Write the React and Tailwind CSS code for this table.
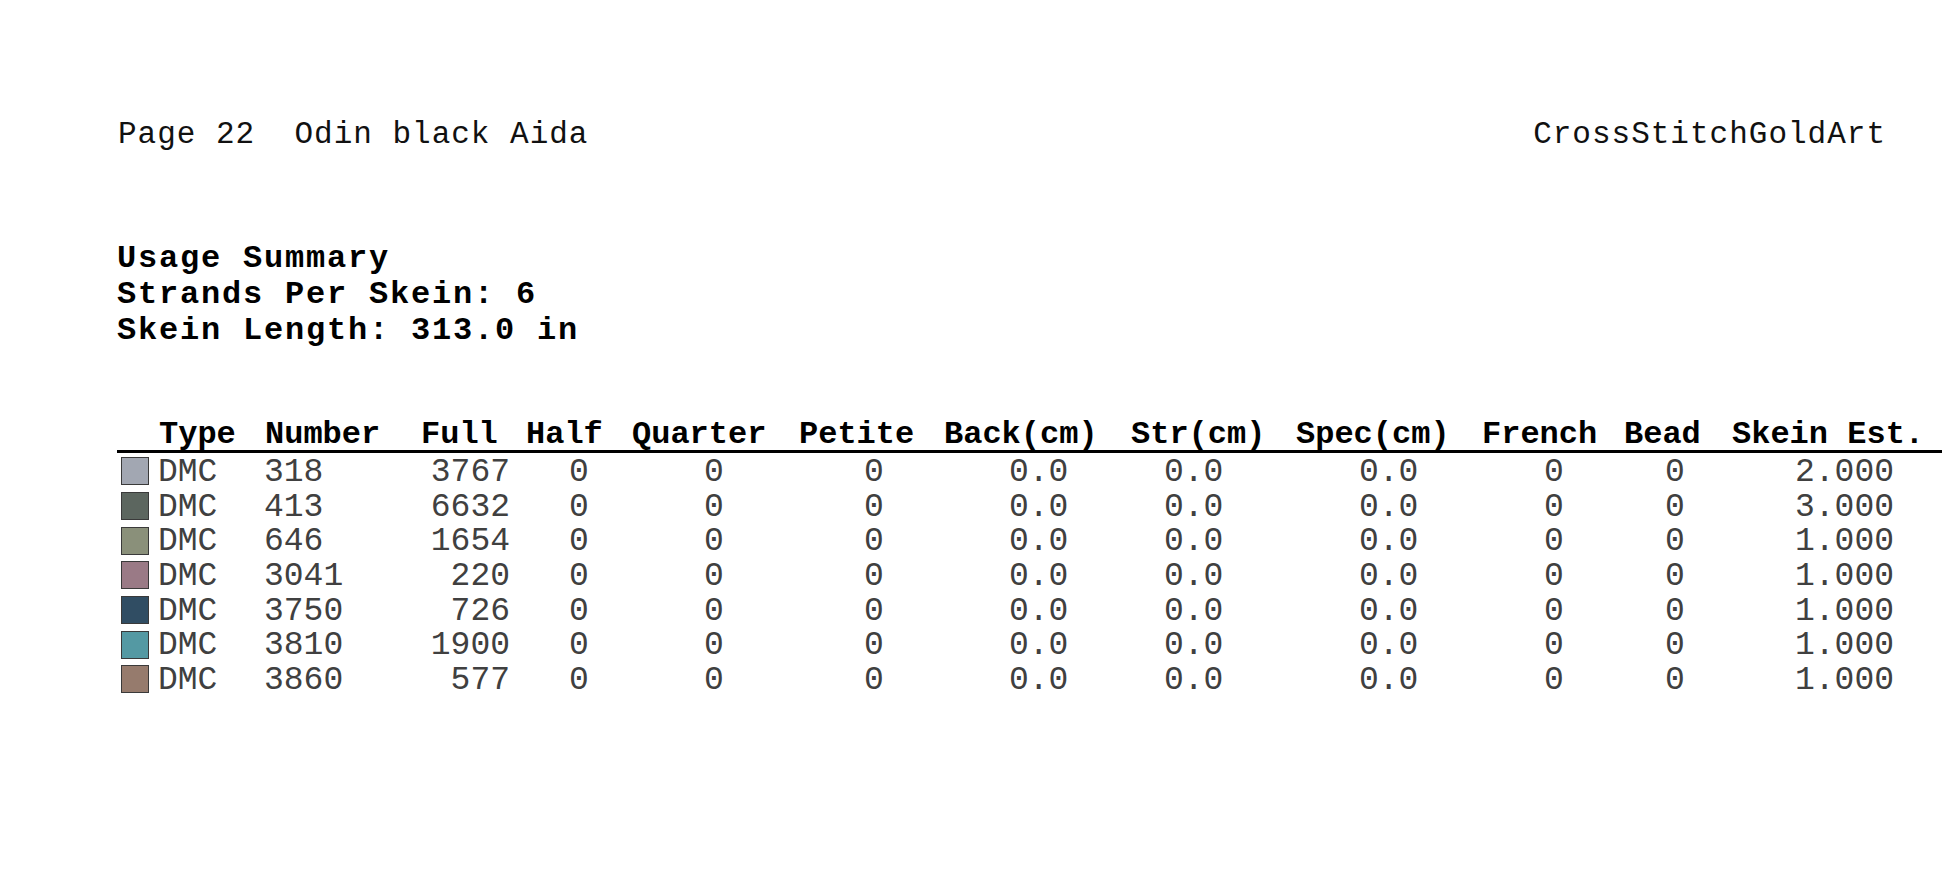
import React from 'react';

const columns = [
  { label: 'Type', head: 'pl-[42px]', cell: 'flex items-center pl-[4px]' },
  { label: 'Number', head: 'pl-[10px]', cell: 'pl-[9px]' },
  { label: 'Full', head: 'pl-[21px]', cell: 'text-right pr-[10px]' },
  { label: 'Half', head: 'pl-[6px]', cell: 'pl-[49px]' },
  { label: 'Quarter', head: 'pl-[12px]', cell: 'pl-[84px]' },
  { label: 'Petite', head: 'pl-[14px]', cell: 'pl-[79px]' },
  { label: 'Back(cm)', head: 'pl-[9px]', cell: 'pl-[74px]' },
  { label: 'Str(cm)', head: 'pl-[16px]', cell: 'pl-[49px]' },
  { label: 'Spec(cm)', head: 'pl-[16px]', cell: 'pl-[79px]' },
  { label: 'French', head: 'pl-[17px]', cell: 'pl-[79px]' },
  { label: 'Bead', head: 'pl-[14px]', cell: 'pl-[55px]' },
  { label: 'Skein Est.', head: 'pl-[12px]', cell: 'pl-[75px]' },
];

const threads = [
  { number: '318', full: '3767', skein: '2.000', swatch: 'bg-[#a2a7b2]' },
  { number: '413', full: '6632', skein: '3.000', swatch: 'bg-[#5c665f]' },
  { number: '646', full: '1654', skein: '1.000', swatch: 'bg-[#8a907a]' },
  { number: '3041', full: '220', skein: '1.000', swatch: 'bg-[#9a7a86]' },
  { number: '3750', full: '726', skein: '1.000', swatch: 'bg-[#304d63]' },
  { number: '3810', full: '1900', skein: '1.000', swatch: 'bg-[#5499a3]' },
  { number: '3860', full: '577', skein: '1.000', swatch: 'bg-[#967b6d]' },
];

const gridCols =
  'grid grid-cols-[138px_145px_120px_100px_165px_150px_180px_165px_185px_145px_110px_222px]';

const mono = { fontFamily: '"Liberation Mono", "DejaVu Sans Mono", monospace' };

const App = () => {
  return (
    <div className="w-[1946px] h-[878px] bg-white text-black" style={mono}>
      {/* page header */}
      <div className="flex justify-between pt-[118px] pl-[118px] pr-[60px] text-[31px] leading-[33px] tracking-[1px] whitespace-pre text-[#111]">
        <span>Page 22  Odin black Aida</span>
        <span>CrossStitchGoldArt</span>
      </div>

      {/* summary */}
      <div className="mt-[90px] pl-[117px] text-[32px] leading-[36px] tracking-[1.8px] font-bold">
        <div>Usage Summary</div>
        <div>Strands Per Skein: 6</div>
        <div>Skein Length: 313.0 in</div>
      </div>

      {/* usage table */}
      <div className="mt-[67px] ml-[117px] w-[1825px]">
        <div className={`${gridCols} h-[37px] border-b-[3px] border-black text-[32px] leading-[37px] font-bold`}>
          {columns.map((col) => (
            <div key={col.label} className={`${col.head} whitespace-nowrap`}>
              {col.label}
            </div>
          ))}
        </div>

        <div className="pt-[1px]">
          {threads.map((t) => {
            const values = ['', t.number, t.full, '0', '0', '0', '0.0', '0.0', '0.0', '0', '0', t.skein];
            return (
              <div key={t.number} className={`${gridCols} h-[34.7px] text-[33px] leading-[38px] text-[#404040]`}>
                {values.map((v, i) =>
                  i === 0 ? (
                    <div key={i} className={`${columns[0].cell} h-[34.7px]`}>
                      <span className={`w-[28px] h-[28px] border border-[#3a3a3a] ${t.swatch}`} />
                      <span className="ml-[9px] leading-[38px] mt-[3px]">DMC</span>
                    </div>
                  ) : (
                    <div key={i} className={`${columns[i].cell} whitespace-nowrap`}>
                      {v}
                    </div>
                  )
                )}
              </div>
            );
          })}
        </div>
      </div>
    </div>
  );
};

export default App;
